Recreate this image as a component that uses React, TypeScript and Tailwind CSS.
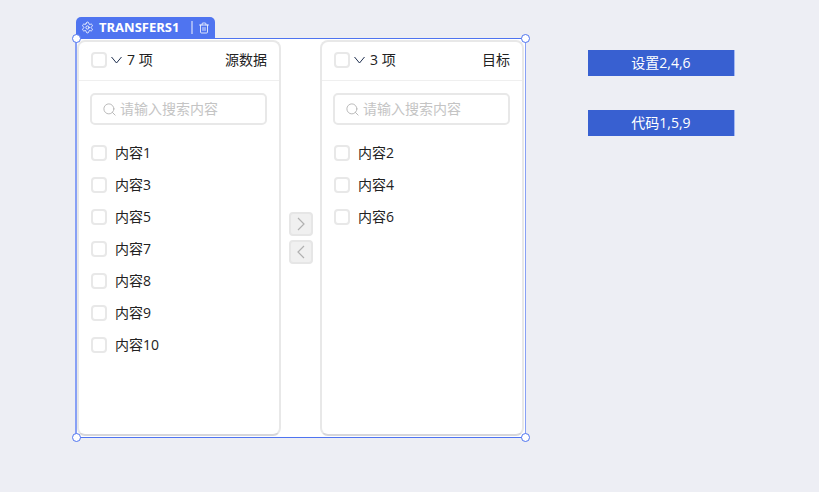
import { Search, Settings, Trash2 } from "lucide-react";

const font = { fontFamily: '"Open Sans", "Noto Sans CJK SC", sans-serif' };

function Box() {
  return <span className="block h-4 w-4 shrink-0 rounded-[4px] border-2 border-[#e8e8e8] bg-white" />;
}

function Panel({ count, title, items }: { count: string; title: string; items: string[] }) {
  return (
    <div className="flex h-[396px] w-[204px] flex-col rounded-lg border-2 border-[#e8e8e8] border-b-[#d6d6da] bg-white">
      <div className="flex h-[39px] shrink-0 items-center border-b border-[#efefef] pb-[2px] pl-[12px] pr-[12px] text-sm text-[#222]">
        <Box />
        <svg width="11" height="8" viewBox="0 0 11 8" fill="none" stroke="#1f2f4f" strokeWidth="1" className="ml-[4px]">
          <path d="M0.5 1 L5.5 7 L10.5 1" />
        </svg>
        <span className="ml-[5px]">{count} 项</span>
        <span className="ml-auto">{title}</span>
      </div>
      <div className="ml-[11px] mr-[12px] mt-[12px] flex h-[32px] shrink-0 items-center rounded-[5px] border-2 border-[#e8e8e8] pl-[10px] text-sm text-[#c4c4c4]">
        <Search size={15} strokeWidth={1.5} className="text-[#b5b5b5]" />
        <span className="ml-[3px]">请输入搜索内容</span>
      </div>
      <ul className="mt-[12px] flex flex-col pl-[12px] text-sm text-[#222]">
        {items.map((t) => (
          <li key={t} className="flex h-[32px] items-center gap-[8px]">
            <Box />
            <span>{t}</span>
          </li>
        ))}
      </ul>
    </div>
  );
}

function Handle({ className }: { className: string }) {
  return <span className={`absolute h-[9px] w-[9px] rounded-full border-[1.5px] border-[#4f74f0] bg-white ${className}`} />;
}

function Tag({ text, className }: { text: string; className: string }) {
  return (
    <div className={`absolute left-[588px] flex h-[26px] w-[147px] items-center justify-center border-r border-[#a3b8f3] bg-[#3860d1] text-sm text-white ${className}`}>
      {text}
    </div>
  );
}

function ArrowButton({ d }: { d: string }) {
  return (
    <button className="flex h-[24px] w-[24px] items-center justify-center rounded-[4px] border-2 border-[#e6e6e6] bg-[#f0f0f0]">
      <svg width="10" height="14" viewBox="0 0 10 14" fill="none" stroke="#b0b0b0" strokeWidth="1.2">
        <path d={d} />
      </svg>
    </button>
  );
}

export default function App() {
  return (
    <div className="relative h-[492px] w-[819px] overflow-hidden bg-[#edeef4]" style={font}>
      <div className="absolute left-[76px] top-[17px] flex h-[21px] w-[139px] items-center rounded-t-[5px] bg-[#4f74f0] pl-[5px] text-white">
        <Settings size={13} strokeWidth={1.6} />
        <span className="ml-[5px] text-[13px] font-bold">TRANSFERS1</span>
        <span className="ml-[12px] h-[13px] w-[2px] bg-[#a0b3f6]" />
        <Trash2 size={12} strokeWidth={1.6} className="ml-[5px]" />
      </div>

      <div className="absolute left-[75px] top-[38px] h-[400px] w-[451px] border border-[#4f74f0] border-l-2 border-l-[#88a0f5] border-r-[#88a0f5] bg-white">
        <div className="flex items-start pt-[1px]">
          <Panel count="7" title="源数据" items={["内容1", "内容3", "内容5", "内容7", "内容8", "内容9", "内容10"]} />
          <div className="flex h-[396px] w-[39px] flex-col items-center justify-center gap-[4px]">
            <ArrowButton d="M2 1 L8 7 L2 13" />
            <ArrowButton d="M8 1 L2 7 L8 13" />
          </div>
          <Panel count="3" title="目标" items={["内容2", "内容4", "内容6"]} />
        </div>
        <Handle className="-left-[5px] -top-[5px]" />
        <Handle className="-right-[5px] -top-[5px]" />
        <Handle className="-left-[5px] -bottom-[5px]" />
        <Handle className="-right-[5px] -bottom-[5px]" />
      </div>

      <Tag text="设置2,4,6" className="top-[50px]" />
      <Tag text="代码1,5,9" className="top-[110px]" />
    </div>
  );
}
